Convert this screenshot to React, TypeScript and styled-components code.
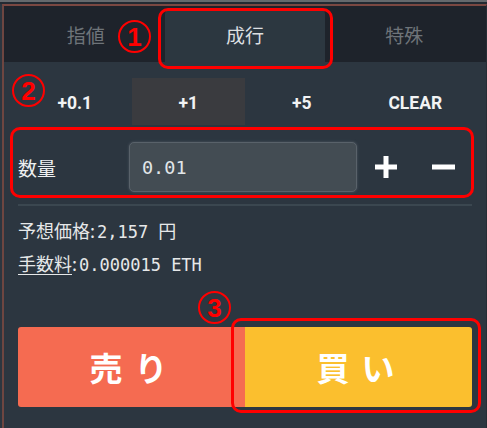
import React from "react";
import styled, { createGlobalStyle } from "styled-components";

const Global = createGlobalStyle`
  html, body { margin: 0; padding: 0; background: #2c3640; }
  body { font-family: "Noto Sans CJK JP", "Noto Sans", sans-serif; }
  * { box-sizing: border-box; }
`;

const Page = styled.div`
  position: relative;
  width: 487px;
  height: 428px;
  background: #2c3640;
  overflow: hidden;
  display: flex;
  flex-direction: column;
`;

const TopStrip = styled.div`
  height: 2px;
  background: #65696d;
  flex: none;
`;

const Gap = styled.div`
  height: 2px;
  background: #232a32;
  flex: none;
`;

const Panel = styled.div`
  flex: 1;
  margin-left: 2px;
  border-top: 2px solid #7b4842;
  border-left: 2px solid #6e4641;
  border-right: 1px solid #262d35;
  display: flex;
  flex-direction: column;
`;

const TabBar = styled.div`
  display: grid;
  grid-template-columns: 1fr 1fr 1fr;
  height: 56px;
  padding: 2px 2px 0 2px;
  background: #1e232b;
`;

const Tab = styled.div<{ $active?: boolean }>`
  display: flex;
  align-items: center;
  justify-content: center;
  font-size: 19px;
  color: ${(p) => (p.$active ? "#dcdfe1" : "#6e7479")};
  background: ${(p) => (p.$active ? "#2c3740" : "transparent")};
  border-radius: 6px 6px 0 0;
  padding-bottom: 2px;
`;

const Body = styled.div`
  flex: 1;
  display: flex;
  flex-direction: column;
  padding: 16px 14px 0 14px;
`;

const QuickRow = styled.div`
  display: grid;
  grid-template-columns: repeat(4, 1fr);
  height: 47px;
`;

const Quick = styled.div<{ $hl?: boolean }>`
  display: flex;
  align-items: center;
  justify-content: center;
  font-family: Roboto, "Liberation Sans", sans-serif;
  font-weight: 700;
  font-size: 17.5px;
  color: #f2f3f4;
  background: ${(p) => (p.$hl ? "#3a3b3f" : "transparent")};
  padding-top: 2px;
`;

const QtyRow = styled.div`
  display: flex;
  align-items: center;
  height: 64px;
  margin-top: 10px;
`;

const QtyLabel = styled.div`
  width: 112px;
  font-size: 19px;
  color: #eef0f1;
`;

const QtyInput = styled.div`
  width: 230px;
  height: 50px;
  background: #434c53;
  border: 1px solid #59626a;
  border-radius: 5px;
  box-shadow: 0 0 3px rgba(140, 150, 158, 0.35);
  display: flex;
  align-items: center;
  padding-left: 12px;
  font-family: "DejaVu Sans Mono", monospace;
  font-size: 18.5px;
  color: #e1e6e9;
`;

const IconBtn = styled.div`
  width: 58px;
  display: flex;
  align-items: center;
  justify-content: center;
`;

const Separator = styled.div`
  height: 2px;
  background: #3b4750;
  margin-top: 5px;
`;

const Info = styled.div`
  display: flex;
  flex-direction: column;
  gap: 7px;
  margin-top: 12px;
  font-size: 18px;
  color: #e6e8e9;
  line-height: 24px;
`;

const InfoLine = styled.div`
  display: flex;
  align-items: baseline;
`;

const Key = styled.span<{ $u?: boolean }>`
  text-decoration: ${(p) => (p.$u ? "underline" : "none")};
  text-underline-offset: 3px;
`;

const Mono = styled.span`
  font-family: "DejaVu Sans Mono", monospace;
  font-size: 17px;
  margin-left: 2px;
`;

const Yen = styled.span`
  margin-left: 10px;
`;

const Actions = styled.div`
  display: grid;
  grid-template-columns: 1fr 1fr;
  height: 80px;
  margin-top: 50px;
  border-radius: 3px;
  overflow: hidden;
`;

const ActionBtn = styled.div<{ $bg: string }>`
  background: ${(p) => p.$bg};
  display: flex;
  align-items: center;
  justify-content: center;
  color: #ffffff;
  font-weight: 700;
  font-size: 33px;
  letter-spacing: 12px;
  padding-left: 6px;
`;

const Mark = styled.div<{ $x: number; $y: number; $w: number; $h: number }>`
  position: absolute;
  left: ${(p) => p.$x}px;
  top: ${(p) => p.$y}px;
  width: ${(p) => p.$w}px;
  height: ${(p) => p.$h}px;
  border: 3px solid #ff0000;
  border-radius: 10px;
  pointer-events: none;
`;

const Num = styled.div<{ $x: number; $y: number }>`
  position: absolute;
  left: ${(p) => p.$x}px;
  top: ${(p) => p.$y}px;
  width: 33px;
  height: 33px;
  border: 2px solid #ff0000;
  border-radius: 50%;
  display: flex;
  align-items: center;
  justify-content: center;
  color: #ff0000;
  font-family: "Liberation Sans", Arial, sans-serif;
  font-weight: 700;
  font-size: 26px;
  line-height: 1;
  padding-top: 1px;
`;

const Plus = () => (
  <svg width="22" height="22" viewBox="0 0 22 22">
    <rect x="8.5" y="0" width="5" height="22" fill="#fff" />
    <rect x="0" y="8.5" width="22" height="5" fill="#fff" />
  </svg>
);

const Minus = () => (
  <svg width="23" height="22" viewBox="0 0 23 22">
    <rect x="0" y="8.5" width="23" height="5" fill="#fff" />
  </svg>
);

export default function App() {
  return (
    <>
      <Global />
      <Page>
        <TopStrip />
        <Gap />
        <Panel>
          <TabBar>
            <Tab>指値</Tab>
            <Tab $active>成行</Tab>
            <Tab>特殊</Tab>
          </TabBar>
          <Body>
            <QuickRow>
              <Quick>+0.1</Quick>
              <Quick $hl>+1</Quick>
              <Quick>+5</Quick>
              <Quick>CLEAR</Quick>
            </QuickRow>
            <QtyRow>
              <QtyLabel>数量</QtyLabel>
              <QtyInput>0.01</QtyInput>
              <IconBtn>
                <Plus />
              </IconBtn>
              <IconBtn>
                <Minus />
              </IconBtn>
            </QtyRow>
            <Separator />
            <Info>
              <InfoLine>
                <Key>予想価格</Key>:<Mono>2,157</Mono>
                <Yen>円</Yen>
              </InfoLine>
              <InfoLine>
                <Key $u>手数料</Key>:<Mono>0.000015 ETH</Mono>
              </InfoLine>
            </Info>
            <Actions>
              <ActionBtn $bg="#f56b51">売り</ActionBtn>
              <ActionBtn $bg="#fbbf2e">買い</ActionBtn>
            </Actions>
          </Body>
        </Panel>
        <Mark $x={158} $y={8} $w={175} $h={61} />
        <Mark $x={10} $y={127} $w={464} $h={71} />
        <Mark $x={231} $y={318} $w={250} $h={95} />
        <Num $x={118} $y={20}>1</Num>
        <Num $x={12} $y={74}>2</Num>
        <Num $x={198} $y={291}>3</Num>
      </Page>
    </>
  );
}
